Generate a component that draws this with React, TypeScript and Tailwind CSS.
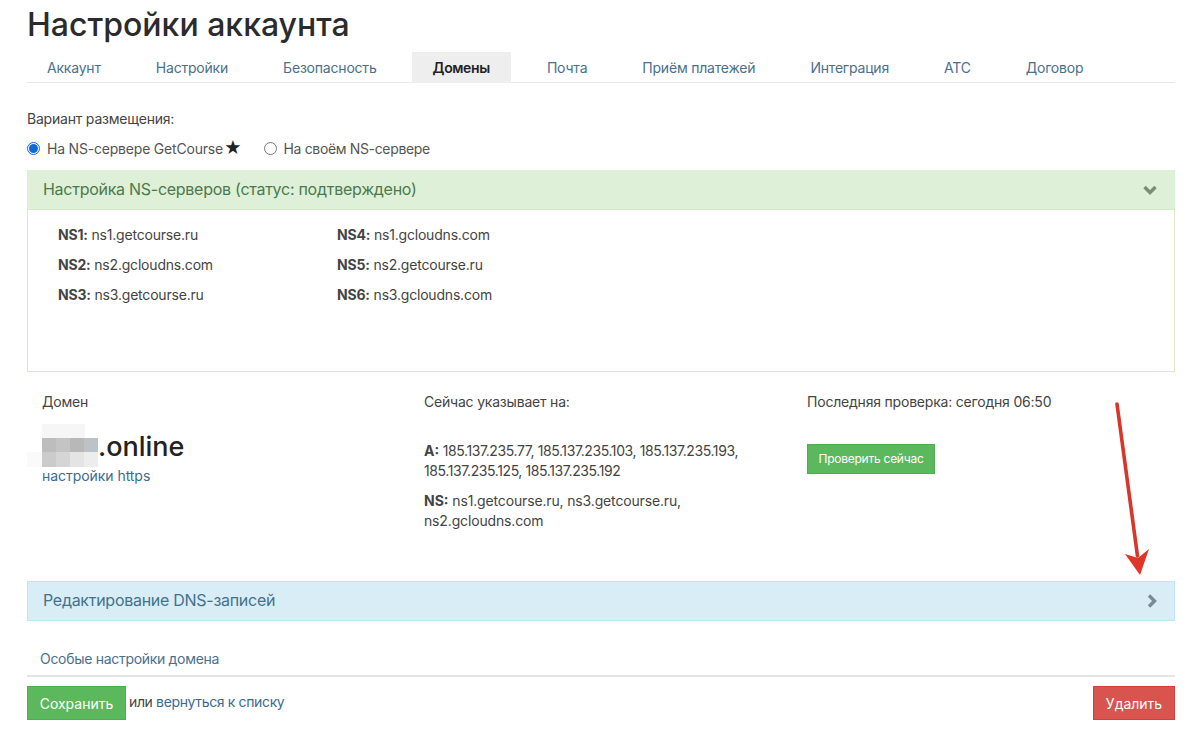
import React from "react";

const tabs: [string, boolean][] = [
  ["Аккаунт", false],
  ["Настройки", false],
  ["Безопасность", false],
  ["Домены", true],
  ["Почта", false],
  ["Приём платежей", false],
  ["Интеграция", false],
  ["АТС", false],
  ["Договор", false],
];

function Ns({ k, v }: { k: string; v: string }) {
  return (
    <div className="h-[30px] leading-[20px] whitespace-nowrap">
      <b className="font-bold">{k}:</b> {v}
    </div>
  );
}

export default function App() {
  return (
    <div
      className="relative h-[749px] w-[1200px] overflow-hidden bg-white pr-[25px] pl-[27px] text-[14px] tracking-[-0.2px] text-[#333]"
      style={{ fontFamily: "Inter, 'Noto Sans', sans-serif" }}
    >
      <h1 className="h-[52px] pt-[5px] text-[32px] leading-[40px] font-medium tracking-normal text-[#2b2b2b]">Настройки аккаунта</h1>

      <div className="flex h-[31px] gap-[15px] border-b border-[#e8e8e8]">
        {tabs.map(([t, active]) => (
          <div
            key={t}
            className={
              active
                ? "mr-[1px] h-[31px] bg-[#eeeeee] px-[21px] pt-[6px] leading-[20px] font-semibold tracking-[-0.35px] text-[#222]"
                : "h-[30px] px-[20px] pt-[6px] leading-[20px] text-[#49708f]"
            }
          >
            {t}
          </div>
        ))}
      </div>

      <div className="mt-[26px] h-[20px] leading-[20px] text-[#444]">Вариант размещения:</div>
      <div className="mt-[9px] flex h-[20px] items-center leading-[20px] text-[#555]">
        <span className="flex h-[13px] w-[13px] items-center justify-center rounded-full border border-[#0b6bd6] bg-white">
          <span className="h-[9px] w-[9px] rounded-full bg-[#0b6bd6]" />
        </span>
        <span className="ml-[7px] translate-y-[1px]">На NS-сервере GetCourse</span>
        <span className="ml-[1px] text-[17px] leading-[20px] text-[#222]">★</span>
        <span className="ml-[22px] h-[13px] w-[13px] rounded-full border border-[#777] bg-white" />
        <span className="ml-[7px] translate-y-[1px] tracking-[-0.35px]">На своём NS-сервере</span>
      </div>

      <div className="mt-[12px] border border-[#e6e3c8]">
        <div className="-m-px flex h-[40px] items-center justify-between border-b border-[#d6e9c6] bg-[#dff0d8] pr-[17px] pl-[16px] text-[16px] tracking-[-0.27px] text-[#4a7a4b]">
          <span className="pb-[2px]">Настройка NS-серверов (статус: подтверждено)</span>
          <svg width="16" height="12" viewBox="0 0 16 12">
            <path d="M2.5 3 L8 8.5 L13.5 3" fill="none" stroke="#7d8a7c" strokeWidth="3.4" />
          </svg>
        </div>
        <div className="flex h-[162px] pt-[16px] pl-[30px] text-[#444]">
          <div className="w-[279px]">
            <Ns k="NS1" v="ns1.getcourse.ru" />
            <Ns k="NS2" v="ns2.gcloudns.com" />
            <Ns k="NS3" v="ns3.getcourse.ru" />
          </div>
          <div>
            <Ns k="NS4" v="ns1.gcloudns.com" />
            <Ns k="NS5" v="ns2.getcourse.ru" />
            <Ns k="NS6" v="ns3.gcloudns.com" />
          </div>
        </div>
      </div>

      <div className="flex h-[209px] pt-[20px] pl-[15px] text-[#444]">
        <div className="w-[382px]">
          <div className="h-[20px] leading-[20px]">Домен</div>
          <div className="mt-[13px] -ml-[15px] flex h-[41px] items-center">
            <svg width="71" height="43" viewBox="0 0 71 43" className="block shrink-0">
              <rect x="15" y="0" width="43" height="14" fill="#f6f6f6" />
              <rect x="15" y="14" width="14" height="14" fill="#bdbdbd" />
              <rect x="29" y="14" width="14" height="14" fill="#c4c4c4" />
              <rect x="43" y="14" width="14" height="14" fill="#b8b8b8" />
              <rect x="57" y="14" width="14" height="14" fill="#bcc2c8" />
              <rect x="0" y="28" width="15" height="15" fill="#fafafa" />
              <rect x="15" y="28" width="14" height="15" fill="#cbcbcb" />
              <rect x="29" y="28" width="14" height="15" fill="#d5d5d5" />
              <rect x="43" y="28" width="14" height="15" fill="#e4e4e4" />
              <rect x="57" y="28" width="14" height="15" fill="#ededed" />
            </svg>
            <span className="mt-[2px] text-[27px] leading-[30px] font-medium tracking-normal text-[#222]">.online</span>
          </div>
          <div className="h-[20px] leading-[20px] tracking-[-0.05px] text-[#3b6a91]">настройки https</div>
        </div>
        <div className="w-[383px]">
          <div className="h-[20px] leading-[20px]">Сейчас указывает на:</div>
          <div className="mt-[29px] w-[330px] leading-[20px] tracking-[-0.4px]">
            <b className="font-bold tracking-normal">A:</b> 185.137.235.77, 185.137.235.103, 185.137.235.193, 185.137.235.125, 185.137.235.192
          </div>
          <div className="mt-[10px] w-[300px] leading-[20px] tracking-[-0.15px]">
            <b className="font-bold tracking-normal">NS:</b> ns1.getcourse.ru, ns3.getcourse.ru, ns2.gcloudns.com
          </div>
        </div>
        <div>
          <div className="h-[20px] leading-[20px]">Последняя проверка: сегодня 06:50</div>
          <button className="mt-[32px] h-[30px] w-[128px] border border-[#4cae4c] bg-[#5cb85c] text-[12px] tracking-[-0.25px] text-white">
            Проверить сейчас
          </button>
        </div>
      </div>

      <div className="flex h-[40px] items-center justify-between border border-[#bce8f1] bg-[#d9edf7] pr-[16px] pl-[15px] text-[16px] tracking-[-0.28px] text-[#44728c]">
        <span className="pb-[2px]">Редактирование DNS-записей</span>
        <svg width="12" height="16" viewBox="0 0 12 16">
          <path d="M3 2.5 L8.5 8 L3 13.5" fill="none" stroke="#7a8a94" strokeWidth="3.4" />
        </svg>
      </div>

      <div className="mt-[28px] h-[28px] border-b-2 border-[#e5e5e5] pl-[13px] leading-[20px] tracking-[-0.3px] text-[#49708f]">
        Особые настройки домена
      </div>

      <div className="mt-[9px] flex items-start justify-between">
        <div className="flex items-center">
          <button className="h-[34px] w-[99px] border border-[#4cae4c] bg-[#5cb85c] text-[14px] tracking-normal text-white">Сохранить</button>
          <span className="ml-[3px] -translate-y-[1px] leading-[20px] tracking-[-0.36px] text-[#444]">
            или <span className="text-[#3b6a91]">вернуться к списку</span>
          </span>
        </div>
        <button className="h-[34px] w-[82px] border border-[#d43f3a] bg-[#d9534f] text-[14px] tracking-normal text-white">Удалить</button>
      </div>

      <svg className="pointer-events-none absolute top-[400px] left-[1110px]" width="50" height="180" viewBox="0 0 50 180">
        <path d="M7 4 L27.5 156" stroke="#d9362b" strokeWidth="3.6" strokeLinecap="round" fill="none" />
        <path d="M15 154 L28 158 L39 149 L30 175 Z" fill="#e0352b" />
      </svg>
    </div>
  );
}
